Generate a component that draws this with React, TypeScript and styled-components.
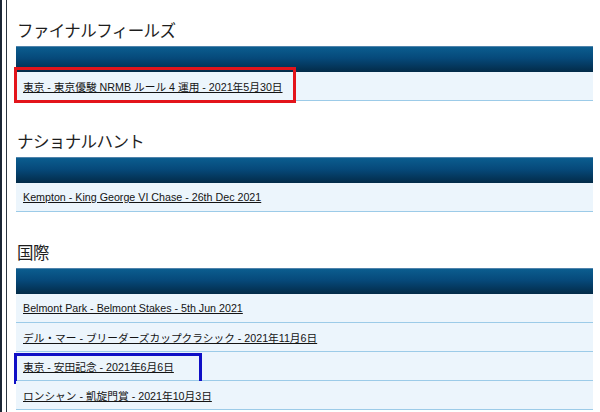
import React from 'react';
import styled, { createGlobalStyle } from 'styled-components';

const GlobalStyle = createGlobalStyle`
  html, body {
    margin: 0;
    padding: 0;
    background: #ffffff;
  }
  body {
    font-family: "Liberation Sans", "Noto Sans CJK JP", Arial, sans-serif;
    color: #1c1c1c;
  }
`;

const Frame = styled.div`
  width: 600px;
  height: 412px;
  overflow: hidden;
  display: flex;
  background: #fff;
`;

const OuterRule = styled.div`
  width: 2px;
  background: #1b2735;
  flex: none;
`;

const InnerRule = styled.div`
  width: 1px;
  margin-left: 4px;
  background: #2a3440;
  flex: none;
`;

const Content = styled.div`
  flex: 1;
  padding: 0 7px 0 9px;
`;

const Section = styled.section`
  padding-top: 18px;
  margin-bottom: 10px;
`;

const Heading = styled.h2`
  margin: 0 0 4px 1px;
  height: 24px;
  line-height: 24px;
  font-size: 16.5px;
  font-weight: normal;
  color: #1e1e1e;
  font-family: "Noto Sans CJK JP", "Liberation Sans", sans-serif;
  letter-spacing: -0.6px;
`;

const Table = styled.div`
  display: flex;
  flex-direction: column;
`;

const HeaderBar = styled.div`
  height: 25px;
  border-top: 1px solid #4f83ab;
  background: linear-gradient(#0b5d8f 0%, #06497a 45%, #032b48 100%);
`;

const Row = styled.div`
  position: relative;
  height: 28px;
  display: flex;
  align-items: center;
  padding-left: 7px;
  background: #ecf5fc;
  border-bottom: 1px solid #9ccbe8;
`;

const RaceLink = styled.a`
  font-size: 10.7px;
  color: #141414;
  text-decoration: underline;
  text-underline-offset: 1px;
  cursor: pointer;
`;

const Highlight = styled.div<{ $color: string }>`
  position: absolute;
  border: 3px solid ${(p) => p.$color};
  box-sizing: border-box;
  pointer-events: none;
`;

type Race = {
  label: string;
  mark?: { color: string; left: number; top: number; width: number; height: number };
};

const sections: { title: string; races: Race[] }[] = [
  {
    title: 'ファイナルフィールズ',
    races: [
      {
        label: '東京 - 東京優駿 NRMB ルール 4 運用 - 2021年5月30日',
        mark: { color: '#e3141b', left: -2, top: -5, width: 282, height: 36 },
      },
    ],
  },
  {
    title: 'ナショナルハント',
    races: [{ label: 'Kempton - King George VI Chase - 26th Dec 2021' }],
  },
  {
    title: '国際',
    races: [
      { label: 'Belmont Park - Belmont Stakes - 5th Jun 2021' },
      { label: 'デル・マー - ブリーダーズカップクラシック - 2021年11月6日' },
      {
        label: '東京 - 安田記念 - 2021年6月6日',
        mark: { color: '#0f0fc6', left: -2, top: 1, width: 188, height: 31 },
      },
      { label: 'ロンシャン - 凱旋門賞 - 2021年10月3日' },
    ],
  },
];

export default function App() {
  return (
    <>
      <GlobalStyle />
      <Frame>
        <OuterRule />
        <InnerRule />
        <Content>
          {sections.map((s) => (
            <Section key={s.title}>
              <Heading>{s.title}</Heading>
              <Table>
                <HeaderBar />
                {s.races.map((r) => (
                  <Row key={r.label}>
                    <RaceLink>{r.label}</RaceLink>
                    {r.mark && (
                      <Highlight
                        $color={r.mark.color}
                        style={{
                          left: r.mark.left,
                          top: r.mark.top,
                          width: r.mark.width,
                          height: r.mark.height,
                        }}
                      />
                    )}
                  </Row>
                ))}
              </Table>
            </Section>
          ))}
        </Content>
      </Frame>
    </>
  );
}
